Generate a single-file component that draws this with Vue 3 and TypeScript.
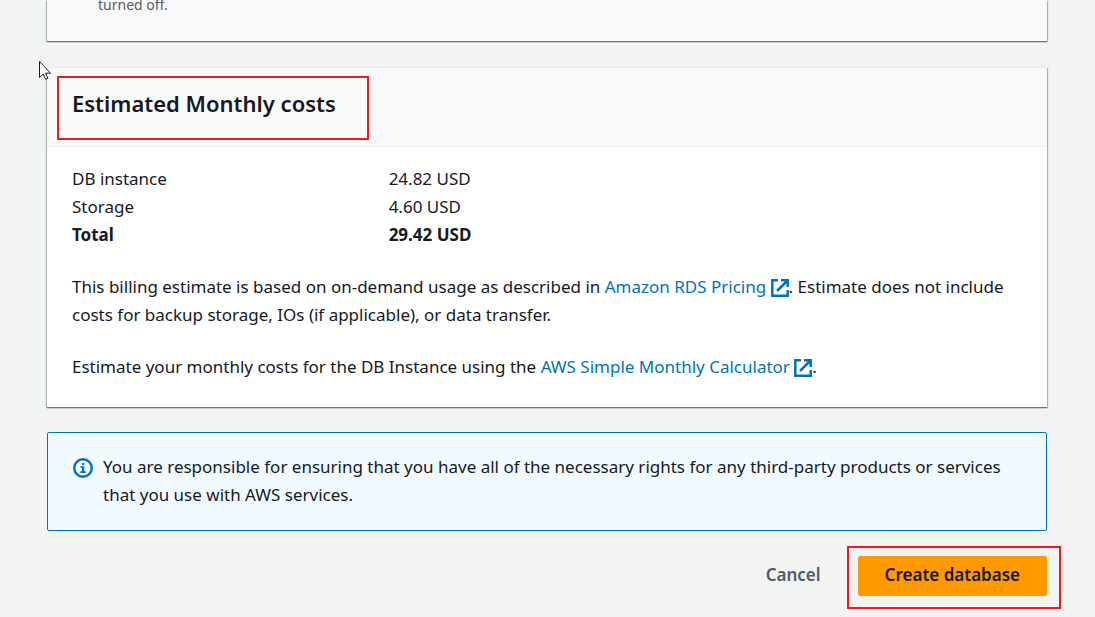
<script setup lang="ts">
interface CostRow {
  label: string
  amount: string
  total?: boolean
}

const costs: CostRow[] = [
  { label: 'DB instance', amount: '24.82 USD' },
  { label: 'Storage', amount: '4.60 USD' },
  { label: 'Total', amount: '29.42 USD', total: true },
]
</script>

<template>
  <main class="page">
    <section class="card previous">
      <p>turned off.</p>
    </section>

    <section class="card">
      <header class="card-header">
        <h2>Estimated Monthly costs</h2>
      </header>
      <div class="card-body">
        <table class="costs">
          <tbody>
            <tr v-for="row in costs" :key="row.label" :class="{ total: row.total }">
              <th scope="row">{{ row.label }}</th>
              <td>{{ row.amount }}</td>
            </tr>
          </tbody>
        </table>
        <p>
          This billing estimate is based on on-demand usage as described in
          <a href="#pricing">Amazon RDS Pricing <svg class="external" viewBox="0 0 18 18" aria-hidden="true"><path d="M7 1.3H1.3v15.4h15.4V11M10 1.3h6.7V8M16.5 1.5L6 12" /></svg></a>. Estimate does not include<br />
          costs for backup storage, IOs (if applicable), or data transfer.
        </p>
        <p>
          Estimate your monthly costs for the DB Instance using the
          <a href="#calculator">AWS Simple Monthly Calculator <svg class="external" viewBox="0 0 18 18" aria-hidden="true"><path d="M7 1.3H1.3v15.4h15.4V11M10 1.3h6.7V8M16.5 1.5L6 12" /></svg></a>.
        </p>
      </div>
    </section>

    <aside class="notice">
      <svg class="info" viewBox="0 0 20 20" aria-hidden="true">
        <circle cx="10" cy="10" r="8.8" />
        <path d="M9 5h2.2v2H9zM7.5 8.2h3.7v5h1.5V15H7.3v-1.8H9V10H7.5z" />
      </svg>
      <p>
        You are responsible for ensuring that you have all of the necessary rights for any third-party products or services<br />
        that you use with AWS services.
      </p>
    </aside>

    <footer class="actions">
      <button type="button" class="cancel">Cancel</button>
      <button type="button" class="create">Create database</button>
    </footer>

    <svg class="pointer" viewBox="0 0 12 19" aria-hidden="true">
      <path d="M.5.5v16l3.7-3.4 2.4 5.2 2.3-1-2.3-5.1h4.9z" />
    </svg>
  </main>
</template>

<style>
body {
  margin: 0;
  background: #f2f3f3;
}
</style>

<style scoped>
.page {
  position: relative;
  box-sizing: border-box;
  min-height: 100vh;
  overflow: hidden;
  padding: 0 48px 8px 47px;
  background: #f2f3f3;
  color: #16191f;
  font: 17px/28px "Noto Sans", "Open Sans", sans-serif;
}

p {
  margin: 0;
}

.card {
  background: #fff;
  box-shadow: 0 1px 1px #6c777a, 1px 1px 1px #b8bfc1, -1px 1px 1px #b8bfc1;
}

.previous {
  padding: 0 51px 31px;
  margin-bottom: 26px;
  background: #fafafa;
  color: #545b64;
  font-size: 14px;
  line-height: 10px;
}

.card-header {
  position: relative;
  padding: 20px 25px 28px;
  border-top: 1px solid #eaeded;
  border-bottom: 1px solid #eaeded;
  background: #fafafa;
}

.card-header h2 {
  margin: 0;
  font-size: 22px;
  line-height: 30px;
  font-weight: 600;
}

.card-header::after {
  content: "";
  position: absolute;
  top: 8px;
  left: 10px;
  box-sizing: border-box;
  width: 312px;
  height: 64px;
  border: 2px solid #ed1c24;
}

.card-body {
  display: grid;
  gap: 24px;
  padding: 18px 25px 26px;
}

.costs {
  width: 100%;
  table-layout: fixed;
  border-collapse: collapse;
}

.costs th,
.costs td {
  padding: 0;
  font-weight: 400;
  text-align: left;
}

.costs th {
  width: 33.33%;
}

.costs .total th,
.costs .total td {
  font-weight: 700;
}

a {
  color: #0073bb;
  text-decoration: none;
  white-space: nowrap;
}

.external {
  width: 18px;
  height: 18px;
  vertical-align: -4px;
  fill: none;
  stroke: currentColor;
  stroke-width: 2.5;
}

.notice {
  display: flex;
  gap: 10px;
  margin-top: 25px;
  padding: 20px 25px 21px;
  border: 1px solid #0073bb;
  border-radius: 2px;
  background: #f1faff;
}

.info {
  flex: none;
  width: 20px;
  height: 20px;
  margin-top: 5px;
  fill: #0073bb;
}

.info circle {
  fill: none;
  stroke: #0073bb;
  stroke-width: 2.4;
}

.actions {
  display: flex;
  justify-content: flex-end;
  gap: 10px;
  margin-top: 25px;
}

button {
  height: 40px;
  padding: 0 27px 2px;
  border: 0;
  border-radius: 2px;
  background: transparent;
  color: #545b64;
  font: 600 17px/28px "Noto Sans", "Open Sans", sans-serif;
}

.create {
  position: relative;
  background: #ff9900;
  color: #16191f;
}

.create::after {
  content: "";
  position: absolute;
  inset: -10px -14px -13px -11px;
  border: 2px solid #ed1c24;
}

.pointer {
  position: absolute;
  top: 61px;
  left: 39px;
  width: 12px;
  height: 19px;
  fill: #fff;
  stroke: #1a1a2a;
}
</style>
